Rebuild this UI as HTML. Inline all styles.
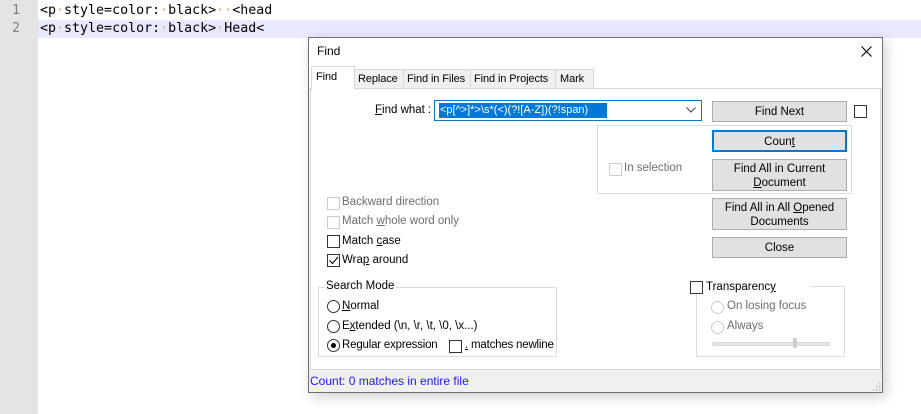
<!DOCTYPE html>
<html><head><meta charset="utf-8"><style>
*{box-sizing:border-box;margin:0;padding:0}
body{width:921px;height:414px;position:relative;overflow:hidden;background:#fff;font-family:"Liberation Sans",sans-serif;font-size:11.5px;color:#000}
.a{position:absolute;white-space:nowrap}
.code{font-family:"DejaVu Sans Mono","Liberation Mono",monospace;font-size:13.3px;line-height:18px}
.dot{color:#e8a060}
.btn{position:absolute;left:712px;width:135px;background:#e1e1e1;border:1px solid #adadad;text-align:center;font-size:11.5px;line-height:14px;white-space:normal}
.cb{position:absolute;width:13px;height:13px;border:1px solid #333;background:#fff}
.cb.d{border-color:#ccc}
.rd{position:absolute;width:13px;height:13px;border:1px solid #333;border-radius:50%;background:#fff}
.rd.d{border-color:#ccc}
.gray{color:#6d6d6d}
.t{font-size:11px;letter-spacing:-0.1px}
u{text-decoration:underline}
</style></head><body>
<div class="a" style="left:0;top:0;width:38px;height:414px;background:#e4e4e4"></div>
<div class="a" style="left:38px;top:20px;width:883px;height:18px;background:#e8e8ff"></div>
<div class="a code" style="left:12px;top:2px;color:#808080">1</div>
<div class="a code" style="left:12px;top:20px;color:#808080">2</div>
<div class="a code" style="left:40px;top:2px">&lt;p<span class="dot">·</span>style=color:<span class="dot">·</span>black&gt;<span class="dot">·</span><span class="dot">·</span>&lt;head</div>
<div class="a code" style="left:40px;top:20px">&lt;p<span class="dot">·</span>style=color:<span class="dot">·</span>black&gt;<span class="dot">·</span>Head&lt;</div>

<div class="a" style="left:308px;top:37px;width:575px;height:356px;background:#f0f0f0;border:1px solid #707070;box-shadow:3px 4px 12px rgba(0,0,0,0.18)"></div>
<div class="a" style="left:309px;top:38px;width:573px;height:30px;background:#fff"></div>
<div class="a" style="left:317px;top:44px;font-size:12px">Find</div>
<svg class="a" style="left:861px;top:46px" width="11" height="11"><path d="M0.5 0.5L10.5 10.5M10.5 0.5L0.5 10.5" stroke="#000" stroke-width="1.1"/></svg>
<div class="a" style="left:309px;top:68px;width:573px;height:20px;background:#fff"></div>
<div class="a" style="left:354px;top:69px;width:240px;height:20px;background:#f0f0f0;border:1px solid #d9d9d9;border-bottom:none"></div>
<div class="a" style="left:403px;top:69px;width:1px;height:19px;background:#d9d9d9"></div>
<div class="a" style="left:470px;top:69px;width:1px;height:19px;background:#d9d9d9"></div>
<div class="a" style="left:555px;top:69px;width:1px;height:19px;background:#d9d9d9"></div>
<div class="a" style="left:310px;top:88px;width:571px;height:282px;background:#fff;border:1px solid #d9d9d9"></div>
<div class="a" style="left:311px;top:66px;width:44px;height:24px;background:#fff;border:1px solid #d9d9d9;border-bottom:none"></div>
<div class="a t" style="left:316px;top:71px">Find</div>
<div class="a t" style="left:358px;top:73px">Replace</div>
<div class="a t" style="left:407px;top:73px">Find in Files</div>
<div class="a t" style="left:474px;top:73px">Find in Projects</div>
<div class="a t" style="left:560px;top:73px">Mark</div>

<div class="a" style="left:375px;top:104px"><u>F</u>ind what :</div>
<div class="a" style="left:434px;top:100px;width:268px;height:21px;border:1px solid #0078d7;background:#fff"></div>
<div class="a" style="left:439px;top:103px;height:15px;width:168px;background:#0078d7;color:#fff;line-height:15px;padding-left:1px;font-size:11px">&lt;p[^&gt;]*&gt;\s*(&lt;)(?![A-Z])(?!span)</div>
<svg class="a" style="left:686px;top:107px" width="10" height="6"><path d="M0.5 0.5L5 5L9.5 0.5" stroke="#444" fill="none"/></svg>

<div class="btn" style="top:101px;height:21px;padding-top:3px">Find Next</div>
<div class="cb" style="left:854px;top:105px"></div>
<div class="a" style="left:597px;top:125px;width:255px;height:69px;border:1px solid #dcdcdc"></div>
<div class="btn" style="top:130px;height:22px;border:2px solid #0078d7;padding-top:3px">Coun<u>t</u></div>
<div class="cb d" style="left:609px;top:163px"></div>
<div class="a gray" style="left:624px;top:162px">In selection</div>
<div class="btn" style="top:159px;height:32px;padding-top:2px">Find All in Current<br><u>D</u>ocument</div>
<div class="btn" style="top:198px;height:32px;padding-top:2px">Find All in All <u>O</u>pened<br>Documents</div>
<div class="btn" style="top:237px;height:21px;padding-top:3px">Close</div>

<div class="cb d" style="left:327px;top:197px"></div>
<div class="a gray" style="left:342px;top:196px">Backward direction</div>
<div class="cb d" style="left:327px;top:216px"></div>
<div class="a gray" style="left:342px;top:215px">Match <u>w</u>hole word only</div>
<div class="cb" style="left:327px;top:235px"></div>
<div class="a" style="left:342px;top:235px">Match <u>c</u>ase</div>
<div class="cb" style="left:327px;top:254px"></div>
<svg class="a" style="left:328px;top:255px" width="11" height="11"><path d="M1.5 5.5L4.5 8.5L10 2" stroke="#000" fill="none" stroke-width="1.1"/></svg>
<div class="a" style="left:342px;top:254px">Wra<u>p</u> around</div>

<div class="a" style="left:318px;top:287px;width:239px;height:70px;border:1px solid #dcdcdc"></div>
<div class="a" style="left:324px;top:280px;background:#fff;padding:0 2px">Search Mode</div>
<div class="rd" style="left:327px;top:300px"></div>
<div class="a" style="left:342px;top:300px"><u>N</u>ormal</div>
<div class="rd" style="left:327px;top:320px"></div>
<div class="a" style="left:342px;top:320px">E<u>x</u>tended (\n, \r, \t, \0, \x...)</div>
<div class="rd" style="left:327px;top:339px"></div>
<div class="a" style="left:331px;top:343px;width:5px;height:5px;border-radius:50%;background:#000"></div>
<div class="a" style="left:342px;top:339px;letter-spacing:-0.2px">Re<u>g</u>ular expression</div>
<div class="cb" style="left:449px;top:340px"></div>
<div class="a" style="left:465px;top:339px;letter-spacing:-0.2px"><u>.</u> matches newline</div>

<div class="a" style="left:696px;top:286px;width:149px;height:71px;border:1px solid #dcdcdc"></div>
<div class="a" style="left:688px;top:280px;width:122px;height:14px;background:#fff"></div>
<div class="cb" style="left:690px;top:281px"></div>
<div class="a" style="left:706px;top:281px">Transparenc<u>y</u></div>
<div class="rd d" style="left:711px;top:301px"></div>
<div class="a gray" style="left:727px;top:300px">On losing focus</div>
<div class="rd d" style="left:711px;top:321px"></div>
<div class="a gray" style="left:727px;top:320px">Always</div>
<div class="a" style="left:712px;top:342px;width:118px;height:4px;background:#e7e7e7;border:1px solid #dadada"></div>
<div class="a" style="left:793px;top:338px;width:4px;height:10px;background:#cdcdcd"></div>

<div class="a" style="left:310px;top:374px;color:#1a1aff;font-size:12px">Count: 0 matches in entire file</div>
<svg class="a" style="left:873px;top:383px" width="8" height="8"><g fill="#bbb"><rect x="6" y="0" width="1.5" height="1.5"/><rect x="3" y="3" width="1.5" height="1.5"/><rect x="6" y="3" width="1.5" height="1.5"/><rect x="0" y="6" width="1.5" height="1.5"/><rect x="3" y="6" width="1.5" height="1.5"/><rect x="6" y="6" width="1.5" height="1.5"/></g></svg>
</body></html>
